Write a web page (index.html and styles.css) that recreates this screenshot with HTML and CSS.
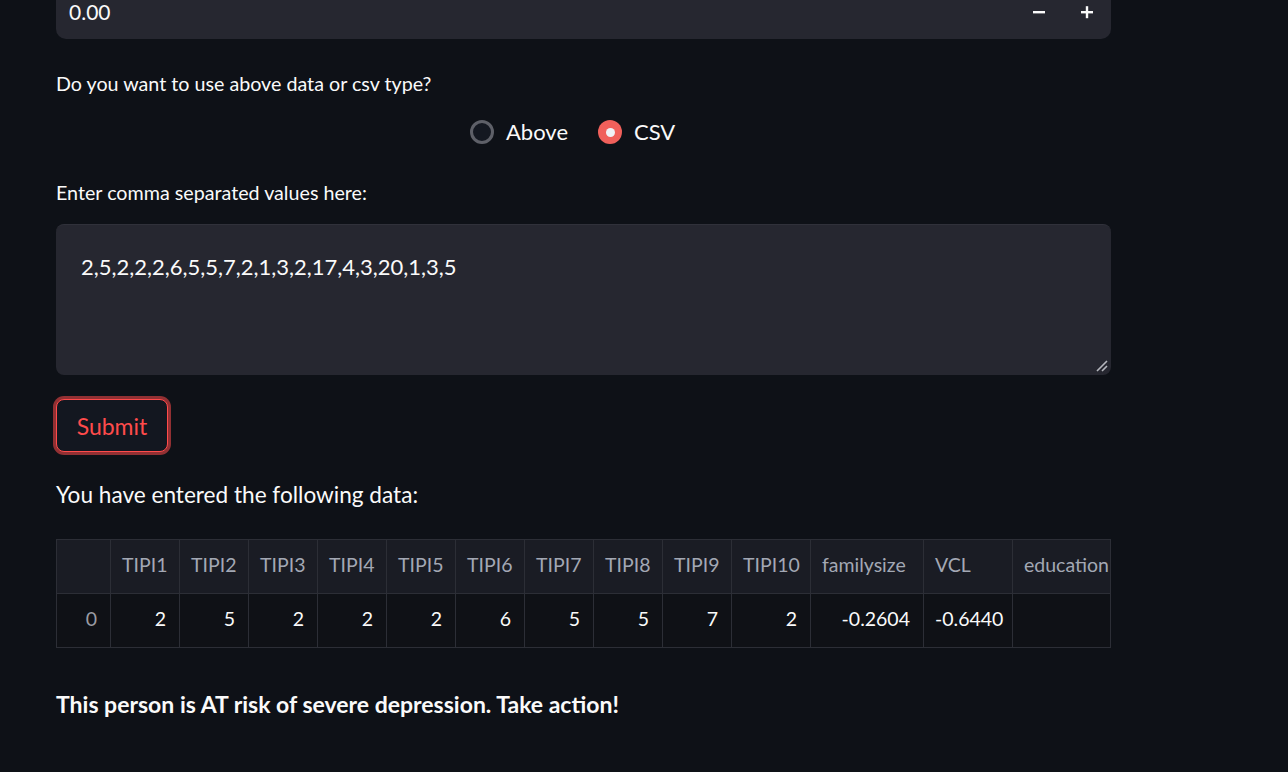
FILE: index.html
```html
<!DOCTYPE html>
<html>
<head>
<meta charset="utf-8">
<link rel="stylesheet" href="styles.css">
</head>
<body>
<div class="main">
  <div class="numinput">
    <span class="numval">0.00</span>
    <div class="stepper">
      <span class="step"><svg width="14" height="14" viewBox="0 0 14 14"><rect x="1" y="6" width="12" height="2.4" fill="#fafafa"/></svg></span>
      <span class="step"><svg width="14" height="14" viewBox="0 0 14 14"><rect x="1" y="6" width="12" height="2.4" fill="#fafafa"/><rect x="5.8" y="1.2" width="2.4" height="12" fill="#fafafa"/></svg></span>
    </div>
  </div>

  <div class="label q1">Do you want to use above data or csv type?</div>
  <div class="radios">
    <label class="radio"><span class="dot off"></span><span>Above</span></label>
    <label class="radio"><span class="dot on"><span class="inner"></span></span><span>CSV</span></label>
  </div>

  <div class="label q2">Enter comma separated values here:</div>
  <div class="textarea">
    <span>2,5,2,2,2,6,5,5,7,2,1,3,2,17,4,3,20,1,3,5</span>
    <svg class="grip" width="14" height="14" viewBox="0 0 14 14"><path d="M12 2 L2 12 M12 7 L7 12" stroke="#b5b7bd" stroke-width="1.6" fill="none"/></svg>
  </div>

  <div class="btnwrap"><button class="submit">Submit</button></div>

  <p class="entered">You have entered the following data:</p>

  <div class="tablewrap">
    <table class="grid">
      <colgroup>
        <col style="width:54px"><col style="width:69px"><col style="width:69px"><col style="width:69px"><col style="width:69px"><col style="width:69px"><col style="width:69px"><col style="width:69px"><col style="width:69px"><col style="width:69px"><col style="width:79px"><col style="width:113px"><col style="width:89px"><col style="width:110px">
      </colgroup>
      <thead>
        <tr><th></th><th>TIPI1</th><th>TIPI2</th><th>TIPI3</th><th>TIPI4</th><th>TIPI5</th><th>TIPI6</th><th>TIPI7</th><th>TIPI8</th><th>TIPI9</th><th>TIPI10</th><th>familysize</th><th>VCL</th><th>education</th></tr>
      </thead>
      <tbody>
        <tr><td class="idx">0</td><td>2</td><td>5</td><td>2</td><td>2</td><td>2</td><td>6</td><td>5</td><td>5</td><td>7</td><td>2</td><td>-0.2604</td><td class="left">-0.6440</td><td></td></tr>
      </tbody>
    </table>
  </div>

  <p class="result">This person is AT risk of severe depression. Take action!</p>
</div>
</body>
</html>
```
FILE: styles.css
```css
html, body {
  margin: 0;
  padding: 0;
  background: #0e1117;
  color: #fafafa;
  font-family: "Lato", "Noto Sans", sans-serif;
  overflow: hidden;
}
.main {
  width: 1055px;
  margin: -13px 0 0 56px;
}
.numinput {
  height: 52px;
  background: #262730;
  border-radius: 10px;
  display: flex;
  align-items: center;
  justify-content: space-between;
  padding: 0 0 2px 13px;
  box-sizing: border-box;
}
.numval {
  font-size: 21px;
  line-height: 26px;
}
.stepper {
  display: flex;
  height: 100%;
}
.step {
  width: 48px;
  display: flex;
  align-items: center;
  justify-content: center;
}
.label {
  font-size: 19.7px;
  line-height: 22px;
}
.q1 { margin-top: 34px; }
.radios {
  display: flex;
  gap: 30px;
  padding-left: 414px;
  margin-top: 21px;
  height: 32px;
  align-items: center;
}
.radio {
  display: flex;
  align-items: center;
  gap: 12px;
  font-size: 22px;
  line-height: 26px;
}
.dot {
  width: 24px;
  height: 24px;
  border-radius: 50%;
  box-sizing: border-box;
  display: flex;
  align-items: center;
  justify-content: center;
}
.dot.off {
  border: 3px solid #5e6068;
  background: #141821;
}
.dot.on {
  background: #f0605b;
}
.dot .inner {
  width: 9px;
  height: 9px;
  border-radius: 50%;
  background: #f0f2f6;
}
.q2 { margin-top: 34px; }
.textarea {
  margin-top: 20px;
  height: 151px;
  background: #262730;
  border-radius: 8px;
  border-top: 1px solid #30313a;
  box-sizing: border-box;
  padding: 28px 25px;
  font-size: 22px;
  line-height: 28px;
  position: relative;
}
.grip {
  position: absolute;
  right: 2px;
  bottom: 2px;
}
.btnwrap {
  margin-top: 24px;
  height: 53px;
}
.submit {
  height: 53px;
  width: 112px;
  border-radius: 8px;
  border: 1px solid #ff4b4b;
  background: #131720;
  color: #ff4b4b;
  font-family: "Lato", "Noto Sans", sans-serif;
  font-size: 23px;
  line-height: 28px;
  box-shadow: 0 0 0 3px rgba(255, 75, 75, 0.55);
  padding: 0;
}
.entered {
  margin: 30px 0 0;
  font-size: 22.6px;
  line-height: 26px;
}
.tablewrap {
  margin-top: 31px;
  width: 1055px;
  overflow: hidden;
  border-right: 1px solid #2c2e36;
  box-sizing: border-box;
}
.grid {
  border-collapse: collapse;
  table-layout: fixed;
  width: 1066px;
  font-size: 19.5px;
}
.grid th, .grid td {
  border: 1px solid #2c2e36;
  height: 54px;
  padding: 0 12px 4px 11px;
  white-space: nowrap;
  overflow: hidden;
  box-sizing: border-box;
}
.grid th {
  background: #1a1c24;
  color: #a3a8b4;
  font-weight: normal;
  text-align: left;
}
.grid td {
  background: #0f1116;
  text-align: right;
  padding-right: 13px;
}
.grid td.idx {
  color: #9a9ca3;
}
.grid td.left {
  text-align: left;
}
.result {
  margin: 43px 0 0;
  font-size: 23px;
  font-weight: bold;
  line-height: 26px;
}
```
